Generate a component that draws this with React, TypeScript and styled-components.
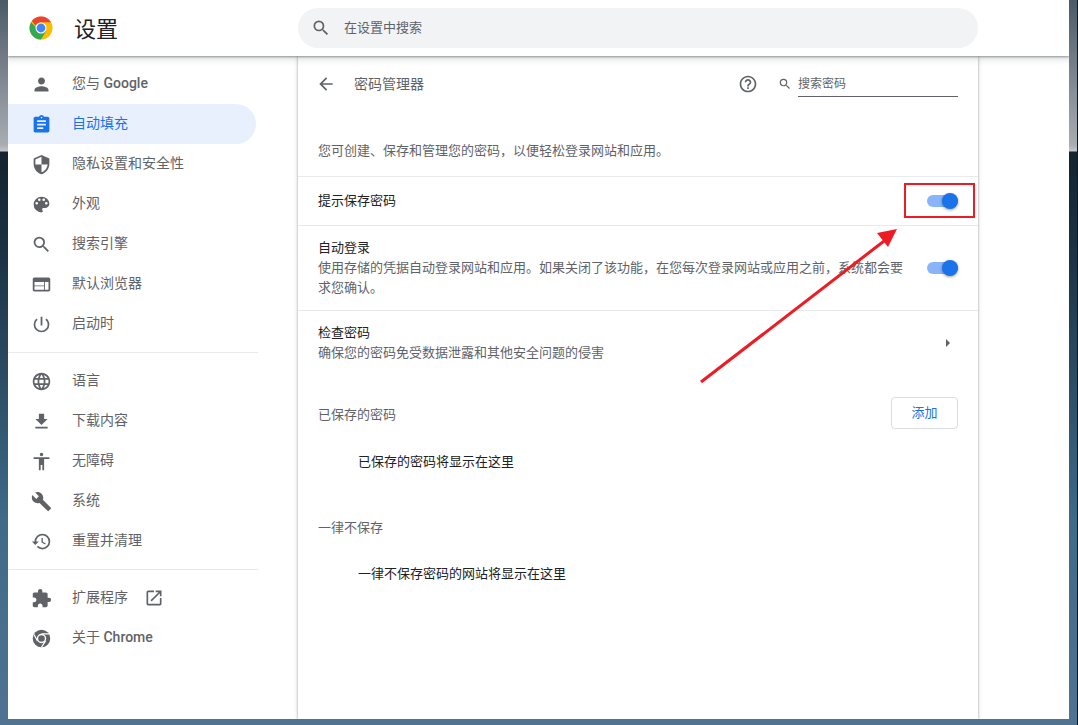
import React from "react";
import styled, { createGlobalStyle } from "styled-components";

const Global = createGlobalStyle`
  html, body { margin: 0; padding: 0; height: 100%; overflow: hidden; }
  body { font-family: Roboto, "Noto Sans CJK SC", sans-serif; }
  #root { height: 100%; }
`;

const Desktop = styled.div`
  width: 1078px; height: 725px; position: relative; overflow: hidden;
  display: flex; flex-direction: column; padding: 0 8px 6px 8px; box-sizing: border-box;
  border-right: 1px solid #0d1a24;
  background: linear-gradient(to bottom, #4b5a68 0, #a9adb2 145px, #c4c6c8 151px, #14232f 152px, #1c3447 260px, #3f6a88 520px, #507391 725px);
`;
const Win = styled.div`flex: 1; min-height: 0; background: #fff; display: flex; flex-direction: column; overflow: hidden;`;
const TopBar = styled.header`
  height: 56px; flex: none; display: flex; align-items: center; background: #fff;
  box-shadow: 0 1px 2px rgba(60,64,67,.5), 0 2px 6px 2px rgba(60,64,67,.15); position: relative; z-index: 2;
`;
const Brand = styled.div`width: 290px; flex: none; display: flex; align-items: center; padding-left: 21px; box-sizing: border-box;`;
const Title = styled.h1`margin: 0 0 2px 21px; font: 400 22px "Noto Sans CJK SC", sans-serif; color: #202124; line-height: 28px;`;
const SearchBox = styled.div`
  width: 680px; height: 40px; border-radius: 20px; background: #f1f3f4; display: flex; align-items: center; padding-left: 13px; box-sizing: border-box;
  color: #5f6368; font-size: 13px; gap: 13px; font-family: "Noto Sans CJK SC", sans-serif;
`;
const SearchHint = styled.span`padding-bottom: 4px;`;
const Body = styled.div`flex: 1; min-height: 0; display: flex;`;
const Side = styled.nav`width: 290px; flex: none; padding-top: 8px; box-sizing: border-box;`;
const NavItem = styled.div<{ $active?: boolean }>`
  width: 248px; height: 40px; display: flex; align-items: center; padding-left: 23px; box-sizing: border-box;
  border-radius: 0 20px 20px 0; font-size: 14px; font-weight: 400; font-family: Roboto, "Noto Sans CJK SC", sans-serif;
  color: ${p => (p.$active ? "#1a73e8" : "#5f6368")};
  background: ${p => (p.$active ? "#e8f0fe" : "transparent")};
  svg.lead { margin-right: 20px; flex: none; }
`;
const NavLabel = styled.span`padding-bottom: 5px;`;
const Latin = styled.span`font-weight: 500;`;
const Sep = styled.div`width: 250px; height: 1px; background: #e8eaed; margin: 8px 0;`;
const Ext = styled.span`display: inline-flex; margin-left: 16px;`;
const Card = styled.main`
  width: 680px; flex: none; box-sizing: border-box; background: #fff;
  box-shadow: 0 0 2px rgba(60,64,67,.45), 0 1px 5px rgba(60,64,67,.18);
  font-family: "Noto Sans CJK SC", sans-serif; position: relative;
`;
const CardHead = styled.div`height: 56px; display: flex; align-items: center; padding: 0 20px 0 18px; color: #5f6368; font-size: 14px;`;
const HeadTitle = styled.span`margin-left: 18px; flex: 1; color: #5f6368; padding-bottom: 2px;`;
const Help = styled.span`display: flex; margin-right: 20px;`;
const PwSearch = styled.div`display: flex; align-items: center; width: 180px; gap: 6px;`;
const PwInput = styled.div`flex: 1; height: 26px; line-height: 24px; border-bottom: 1px solid #5f6368; box-sizing: border-box; color: #5f6368; font-size: 12px; margin-top: -1px;`;
const Intro = styled.div`height: 64px; padding: 28px 20px 0; box-sizing: border-box; font-size: 13px; color: #5f6368; line-height: 20px;`;
const Row = styled.div<{ $h: number }>`
  height: ${p => p.$h}px; border-top: 1px solid #e8eaed; box-sizing: border-box; display: flex; align-items: center; padding: 0 20px;
`;
const RowText = styled.div`flex: 1; min-width: 0; padding: 0 18px 3px 0;`;
const RowLabel = styled.div`font-size: 13px; color: #202124; line-height: 20px;`;
const RowSub = styled.div`font-size: 13px; color: #5f6368; line-height: 20px;`;
const Toggle = styled.span`
  width: 31px; height: 12px; border-radius: 6px; background: #8ab4f8; position: relative; flex: none;
  &::after { content: ""; position: absolute; right: 0; top: -2px; width: 16px; height: 16px; border-radius: 50%; background: #1a73e8; box-shadow: 0 1px 3px rgba(0,0,0,.4); }
`;
const Section = styled.div`height: 54px; box-sizing: border-box; display: flex; align-items: center; justify-content: space-between; padding: 22px 20px 0; font-size: 13px; color: #5f6368;`;
const SectionLabel = styled.span`padding-top: 1px;`;
const AddBtn = styled.button`
  width: 67px; height: 32px; background: #fff; border: 1px solid #dadce0; border-radius: 4px; color: #1a73e8; font: 400 13px "Noto Sans CJK SC", sans-serif; padding: 0 0 3px;
`;
const Empty = styled.div`height: 56px; padding-left: 60px; display: flex; align-items: center; font-size: 13px; color: #202124;`;
const SavedEmpty = styled(Empty)`margin-top: 3px;`;
const NeverHead = styled.div`height: 36px; margin-top: 20px; display: flex; align-items: center; padding: 0 20px; font-size: 13px; color: #5f6368;`;
const Annot = styled.svg`position: absolute; left: 0; top: 0; pointer-events: none; z-index: 5;`;

const G = ({ d, size = 21, fill = "#5f6368", cls = "lead" }: { d: string; size?: number; fill?: string; cls?: string }) => (
  <svg className={cls} width={size} height={size} viewBox="0 0 24 24" fill={fill}><path d={d} /></svg>
);

const ChromeLogo = () => (
  <svg width="24" height="24" viewBox="0 0 48 48">
    <circle cx="24" cy="24" r="23" fill="#fbbc04" />
    <path d="M24 1a23 23 0 0 1 19.9 11.5H24a11.5 11.5 0 0 0-10.6 7L5.6 10.2A23 23 0 0 1 24 1z" fill="#ea4335" />
    <path d="M4.1 12.5A23 23 0 0 0 24 47l10-17.2a11.5 11.5 0 0 1-14.6-1.3z" fill="#34a853" />
    <circle cx="24" cy="24" r="11" fill="#fff" />
    <circle cx="24" cy="24" r="8.8" fill="#4285f4" />
  </svg>
);

const ChromeMono = () => (
  <svg className="lead" width="21" height="21" viewBox="0 0 24 24" fill="none">
    <circle cx="12" cy="12" r="10" fill="#5f6368" />
    <circle cx="12" cy="12" r="4.6" fill="#5f6368" stroke="#fff" strokeWidth="1.6" />
    <path d="M12 6.6h9M7.4 14.8 3.4 7.5M16.6 14.8 12 22" stroke="#fff" strokeWidth="1.4" />
  </svg>
);

const items1: [React.ReactNode, string][] = [
  [<>您与 <Latin>Google</Latin></>, "M12 12c2.21 0 4-1.79 4-4s-1.79-4-4-4-4 1.79-4 4 1.79 4 4 4zm0 2c-2.67 0-8 1.34-8 4v2h16v-2c0-2.66-5.33-4-8-4z"],
  ["自动填充", "M19 3h-4.18C14.4 1.84 13.3 1 12 1s-2.4.84-2.82 2H5c-1.1 0-2 .9-2 2v14c0 1.1.9 2 2 2h14c1.1 0 2-.9 2-2V5c0-1.1-.9-2-2-2zm-7 0c.55 0 1 .45 1 1s-.45 1-1 1-1-.45-1-1 .45-1 1-1zm2 14H7v-2h7v2zm3-4H7v-2h10v2zm0-4H7V7h10v2z"],
  ["隐私设置和安全性", "M12 1 3 5v6c0 5.55 3.84 10.74 9 12 5.16-1.26 9-6.45 9-12V5l-9-4zm0 10.99h7c-.53 4.12-3.28 7.79-7 8.94V12H5V6.3l7-3.11v8.8z"],
  ["外观", "M12 3a9 9 0 0 0 0 18c.83 0 1.5-.67 1.5-1.5 0-.39-.15-.74-.39-1.01-.23-.26-.38-.61-.38-.99 0-.83.67-1.5 1.5-1.5H16c2.76 0 5-2.24 5-5 0-4.42-4.03-8-9-8zm-5.5 9a1.5 1.5 0 1 1 0-3 1.5 1.5 0 0 1 0 3zm3-4a1.5 1.5 0 1 1 0-3 1.5 1.5 0 0 1 0 3zm5 0a1.5 1.5 0 1 1 0-3 1.5 1.5 0 0 1 0 3zm3 4a1.5 1.5 0 1 1 0-3 1.5 1.5 0 0 1 0 3z"],
  ["搜索引擎", "M15.5 14h-.79l-.28-.27A6.47 6.47 0 0 0 16 9.5 6.5 6.5 0 1 0 9.5 16c1.61 0 3.09-.59 4.23-1.57l.27.28v.79l5 4.99L20.49 19l-4.99-5zm-6 0C7.01 14 5 11.99 5 9.5S7.01 5 9.5 5 14 7.01 14 9.5 11.99 14 9.5 14z"],
  ["默认浏览器", "M20 4H4c-1.1 0-2 .9-2 2v12c0 1.1.9 2 2 2h16c1.1 0 2-.9 2-2V6c0-1.1-.9-2-2-2zm-5 14H4v-4h11v4zm0-5H4V9h11v4zm5 5h-4V9h4v9z"],
  ["启动时", "M13 3h-2v10h2V3zm4.83 2.17-1.42 1.42A6.92 6.92 0 0 1 19 12c0 3.87-3.13 7-7 7s-7-3.13-7-7c0-2.22 1.03-4.2 2.58-5.42L6.17 5.17A8.93 8.93 0 0 0 3 12a9 9 0 0 0 18 0c0-2.74-1.23-5.18-3.17-6.83z"],
];
const items2: [string, string][] = [
  ["语言", "M11.99 2C6.47 2 2 6.48 2 12s4.47 10 9.99 10C17.52 22 22 17.52 22 12S17.52 2 11.99 2zm6.93 6h-2.95a15.65 15.65 0 0 0-1.38-3.56A8.03 8.03 0 0 1 18.92 8zM12 4.04c.83 1.2 1.48 2.53 1.91 3.96h-3.82c.43-1.43 1.08-2.76 1.91-3.96zM4.26 14C4.1 13.36 4 12.69 4 12s.1-1.36.26-2h3.38c-.08.66-.14 1.32-.14 2 0 .68.06 1.34.14 2H4.26zm.82 2h2.95c.32 1.25.78 2.45 1.38 3.56A7.987 7.987 0 0 1 5.08 16zm2.95-8H5.08a7.987 7.987 0 0 1 4.33-3.56A15.65 15.65 0 0 0 8.03 8zM12 19.96c-.83-1.2-1.48-2.53-1.91-3.96h3.82c-.43 1.43-1.08 2.76-1.91 3.96zM14.34 14H9.66c-.09-.66-.16-1.32-.16-2 0-.68.07-1.35.16-2h4.68c.09.65.16 1.32.16 2 0 .68-.07 1.34-.16 2zm.25 5.56c.6-1.11 1.06-2.31 1.38-3.56h2.95a8.03 8.03 0 0 1-4.33 3.56zM16.36 14c.08-.66.14-1.32.14-2 0-.68-.06-1.34-.14-2h3.38c.16.64.26 1.31.26 2s-.1 1.36-.26 2h-3.38z"],
  ["下载内容", "M19 9h-4V3H9v6H5l7 7 7-7zM5 18v2h14v-2H5z"],
  ["无障碍", "M12 2a2 2 0 1 1 0 4 2 2 0 0 1 0-4zm9 7h-6v13h-2v-6h-2v6H9V9H3V7h18v2z"],
  ["系统", "m22.7 19-9.1-9.1c.9-2.3.4-5-1.5-6.9-2-2-5-2.4-7.4-1.3L9 6 6 9 1.6 4.7C.4 7.1.9 10.1 2.9 12.1c1.9 1.9 4.6 2.4 6.9 1.5l9.1 9.1c.4.4 1 .4 1.4 0l2.3-2.3c.5-.4.5-1.1.1-1.4z"],
  ["重置并清理", "M13 3a9 9 0 0 0-9 9H1l3.89 3.89.07.14L9 12H6c0-3.87 3.13-7 7-7s7 3.13 7 7-3.13 7-7 7c-1.93 0-3.68-.79-4.94-2.06l-1.42 1.42A8.954 8.954 0 0 0 13 21a9 9 0 0 0 0-18zm-1 5v5l4.28 2.54.72-1.21-3.5-2.08V8H12z"],
];
const puzzle = "M20.5 11H19V7c0-1.1-.9-2-2-2h-4V3.5a2.5 2.5 0 0 0-5 0V5H4c-1.1 0-1.99.9-1.99 2v3.8H3.5c1.49 0 2.7 1.21 2.7 2.7s-1.21 2.7-2.7 2.7H2V20c0 1.1.9 2 2 2h3.8v-1.5c0-1.49 1.21-2.7 2.7-2.7 1.49 0 2.7 1.21 2.7 2.7V22H17c1.1 0 2-.9 2-2v-4h1.5a2.5 2.5 0 0 0 0-5z";
const openNew = "M19 19H5V5h7V3H5a2 2 0 0 0-2 2v14a2 2 0 0 0 2 2h14c1.1 0 2-.9 2-2v-7h-2v7zM14 3v2h3.59l-9.83 9.83 1.41 1.41L19 6.41V10h2V3h-7z";
const search = items1[4][1];

export default function App() {
  return (
    <Desktop>
      <Global />
      <Win>
        <TopBar>
          <Brand><ChromeLogo /><Title>设置</Title></Brand>
          <SearchBox><G d={search} size={20} cls="s" /><SearchHint>在设置中搜索</SearchHint></SearchBox>
        </TopBar>
        <Body>
          <Side>
            {items1.map(([t, d], i) => (
              <NavItem key={i} $active={i === 1}><G d={d} fill={i === 1 ? "#1a73e8" : "#5f6368"} /><NavLabel>{t}</NavLabel></NavItem>
            ))}
            <Sep />
            {items2.map(([t, d]) => <NavItem key={t}><G d={d} /><NavLabel>{t}</NavLabel></NavItem>)}
            <Sep />
            <NavItem><G d={puzzle} /><NavLabel>扩展程序</NavLabel><Ext><G d={openNew} size={20} cls="x" /></Ext></NavItem>
            <NavItem><ChromeMono /><NavLabel>关于 <Latin>Chrome</Latin></NavLabel></NavItem>
          </Side>
          <Card>
            <CardHead>
              <G d="M20 11H7.83l5.59-5.59L12 4l-8 8 8 8 1.41-1.41L7.83 13H20v-2z" size={20} cls="b" />
              <HeadTitle>密码管理器</HeadTitle>
              <Help><G d="M11 18h2v-2h-2v2zm1-16C6.48 2 2 6.48 2 12s4.48 10 10 10 10-4.48 10-10S17.52 2 12 2zm0 18c-4.41 0-8-3.59-8-8s3.59-8 8-8 8 3.59 8 8-3.59 8-8 8zm0-14c-2.21 0-4 1.79-4 4h2c0-1.1.9-2 2-2s2 .9 2 2c0 2-3 1.75-3 5h2c0-2.25 3-2.5 3-5 0-2.21-1.79-4-4-4z" size={20} cls="h" /></Help>
              <PwSearch><G d={search} size={14} cls="s" /><PwInput>搜索密码</PwInput></PwSearch>
            </CardHead>
            <Intro>您可创建、保存和管理您的密码，以便轻松登录网站和应用。</Intro>
            <Row $h={49}><RowText><RowLabel>提示保存密码</RowLabel></RowText><Toggle /></Row>
            <Row $h={85}>
              <RowText>
                <RowLabel>自动登录</RowLabel>
                <RowSub>使用存储的凭据自动登录网站和应用。如果关闭了该功能，在您每次登录网站或应用之前，系统都会要求您确认。</RowSub>
              </RowText>
              <Toggle />
            </Row>
            <Row $h={65}>
              <RowText>
                <RowLabel>检查密码</RowLabel>
                <RowSub>确保您的密码免受数据泄露和其他安全问题的侵害</RowSub>
              </RowText>
              <svg width="16" height="16" viewBox="0 0 16 16"><path d="M4 4l4 4-4 4z" fill="#5f6368" /></svg>
            </Row>
            <Section><SectionLabel>已保存的密码</SectionLabel><AddBtn>添加</AddBtn></Section>
            <SavedEmpty>已保存的密码将显示在这里</SavedEmpty>
            <NeverHead>一律不保存</NeverHead>
            <Empty>一律不保存密码的网站将显示在这里</Empty>
          </Card>
        </Body>
      </Win>
      <Annot width="1078" height="725" viewBox="0 0 1078 725">
        <rect x="905" y="184" width="69" height="33" fill="none" stroke="#ed1c24" strokeWidth="2" />
        <path d="M701 382 888 238" stroke="#ed1c24" strokeWidth="3" fill="none" />
        <path d="M897 229 877 233 888 247z" fill="#ed1c24" />
      </Annot>
    </Desktop>
  );
}
